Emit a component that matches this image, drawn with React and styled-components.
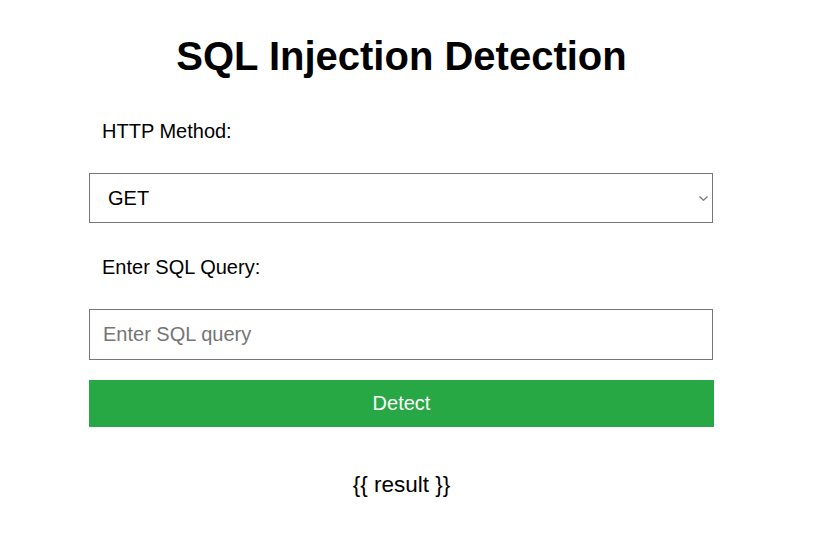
import React from "react";
import styled, { createGlobalStyle } from "styled-components";

const Global = createGlobalStyle`
  html, body { margin: 0; padding: 0; background: #ffffff; }
  body { font-family: "Liberation Sans", Arial, sans-serif; color: #000; }
`;

const Page = styled.div`
  padding: 33px 0 40px 89px;
`;

const Container = styled.div`
  width: 625px;
  display: flex;
  flex-direction: column;
`;

const Title = styled.h1`
  margin: 0;
  font-size: 40px;
  line-height: 46px;
  font-weight: 700;
  text-align: center;
`;

const Label = styled.label`
  display: block;
  margin-top: ${(p) => p.$top}px;
  padding-left: 13px;
  font-size: 20px;
  line-height: 23px;
`;

const SelectWrap = styled.div`
  position: relative;
  margin-top: ${(p) => p.$top}px;
  width: 624px;
  height: 50px;
`;

const Select = styled.select`
  appearance: none;
  -webkit-appearance: none;
  box-sizing: border-box;
  margin: 0;
  width: 100%;
  height: 100%;
  padding: 0 24px 0 18px;
  border: 1px solid #767676;
  border-radius: 0;
  background: #fff;
  font-family: "Liberation Sans", Arial, sans-serif;
  font-size: 20px;
  color: #000;
  outline: none;
`;

const Chevron = styled.svg`
  position: absolute;
  right: 5px;
  top: 50%;
  transform: translateY(-40%);
  pointer-events: none;
`;

const Input = styled.input`
  box-sizing: border-box;
  margin: ${(p) => p.$top}px 0 0 0;
  width: 624px;
  height: 51px;
  padding: 0 13px;
  border: 1px solid #767676;
  border-radius: 0;
  font-family: "Liberation Sans", Arial, sans-serif;
  font-size: 20px;
  color: #000;
  outline: none;
  &::placeholder { color: #757575; }
`;

const Button = styled.button`
  box-sizing: border-box;
  margin-top: 20px;
  width: 625px;
  height: 47px;
  border: none;
  border-radius: 0;
  background: #28a745;
  color: #fff;
  font-family: "Liberation Sans", Arial, sans-serif;
  font-size: 20px;
  cursor: pointer;
`;

const Result = styled.div`
  margin-top: 45px;
  text-align: center;
  font-size: 22.5px;
  line-height: 26px;
`;

export default function App() {
  return (
    <>
      <Global />
      <Page>
        <Container>
          <Title>SQL Injection Detection</Title>
          <Label $top={41} htmlFor="method">HTTP Method:</Label>
          <SelectWrap $top={30}>
            <Select id="method" defaultValue="GET">
              <option value="GET">GET</option>
              <option value="POST">POST</option>
            </Select>
            <Chevron width="9" height="5" viewBox="0 0 9 5">
              <path d="M0.5 0.5 L4.5 4.3 L8.5 0.5" fill="none" stroke="#7a7a7a" strokeWidth="1.2" />
            </Chevron>
          </SelectWrap>
          <Label $top={33} htmlFor="query">Enter SQL Query:</Label>
          <Input $top={30} id="query" type="text" placeholder="Enter SQL query" />
          <Button type="button">Detect</Button>
          <Result>{"{{ result }}"}</Result>
        </Container>
      </Page>
    </>
  );
}
